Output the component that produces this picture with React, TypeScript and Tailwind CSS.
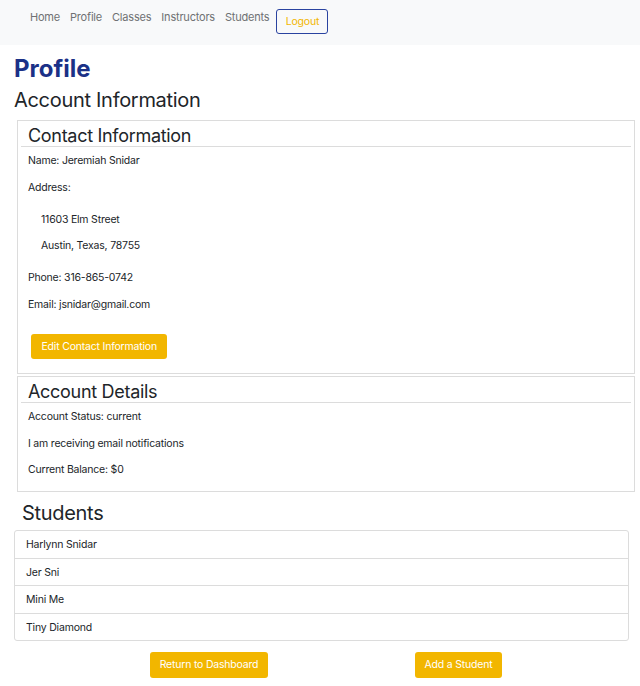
import React from "react";

const students = ["Harlynn Snidar", "Jer Sni", "Mini Me", "Tiny Diamond"];

function Card({ title, children }: { title: string; children: React.ReactNode }) {
  return (
    <div className="border border-[#dcdcdc] px-[3px] pt-[5px]">
      <h3 className="pl-[7px] text-[18px] leading-[20px] tracking-[-0.3px] text-[#212529]">{title}</h3>
      <div className="border-b border-[#dcdcdc]" />
      <div className="pl-[7px] pt-[6px]">{children}</div>
    </div>
  );
}

export default function App() {
  return (
    <div
      className="min-h-[686px] bg-white text-[#212529] text-[10.5px] leading-[16px] tracking-[-0.2px]"
      style={{ fontFamily: "Inter, 'Noto Sans', sans-serif" }}
    >
      <nav className="flex h-[45px] items-start bg-[#f8f9fa] pl-[25px]">
        <div className="flex pt-[9px] text-[11px] tracking-[-0.2px] text-[#6f7173]">
          <a className="px-[5px]">Home</a>
          <a className="px-[5px]">Profile</a>
          <a className="px-[5px]">Classes</a>
          <a className="px-[5px]">Instructors</a>
          <a className="px-[5px]">Students</a>
        </div>
        <button className="ml-[2px] mt-[9px] h-[25px] w-[52px] rounded-[3px] border border-[#2a43a0] text-[10.5px] text-[#f2b600]">
          Logout
        </button>
      </nav>

      <h1 className="mt-[10px] ml-[14px] text-[24px] font-bold leading-[28px] tracking-normal text-[#1b3187]">Profile</h1>
      <h2 className="mt-[5px] ml-[14px] text-[20px] leading-[24px] tracking-[-0.3px]">Account Information</h2>

      <div className="mt-[8px] ml-[17px] mr-[5px] flex flex-col gap-[2px]">
        <Card title="Contact Information">
          <p>Name: Jeremiah Snidar</p>
          <p className="mt-[11px]">Address:</p>
          <div className="pl-[13px]">
            <p className="mt-[16px]">11603 Elm Street</p>
            <p className="mt-[10px]">Austin, Texas, 78755</p>
          </div>
          <p className="mt-[16px]">Phone: 316-865-0742</p>
          <p className="mt-[11px]">Email: jsnidar@gmail.com</p>
          <button className="ml-[3px] mt-[21px] mb-[14px] h-[25px] rounded-[3px] bg-[#f2b600] px-[10.5px] text-[10.5px] text-white">
            Edit Contact Information
          </button>
        </Card>
        <Card title="Account Details">
          <p>Account Status: current</p>
          <p className="mt-[11px]">I am receiving email notifications</p>
          <p className="mt-[10px] mb-[13px]">Current Balance: $0</p>
        </Card>
      </div>

      <h2 className="mt-[9px] ml-[22px] text-[20px] leading-[24px] tracking-[-0.3px]">Students</h2>
      <ul className="mt-[5px] ml-[14px] mr-[11px] rounded-[3px] border border-[#dcdcdc]">
        {students.map((s, i) => (
          <li
            key={s}
            className={`px-[11px] pt-[6px] pb-[4px] leading-[16.5px] ${i > 0 ? "border-t border-[#dcdcdc]" : ""}`}
          >
            {s}
          </li>
        ))}
      </ul>

      <div className="mt-[11px] flex">
        <button className="ml-[150px] h-[26px] w-[118px] rounded-[3px] bg-[#f2b600] text-[10.5px] text-white">
          Return to Dashboard
        </button>
        <button className="ml-[147px] h-[26px] w-[87px] rounded-[3px] bg-[#f2b600] text-[10.5px] text-white">
          Add a Student
        </button>
      </div>
    </div>
  );
}
